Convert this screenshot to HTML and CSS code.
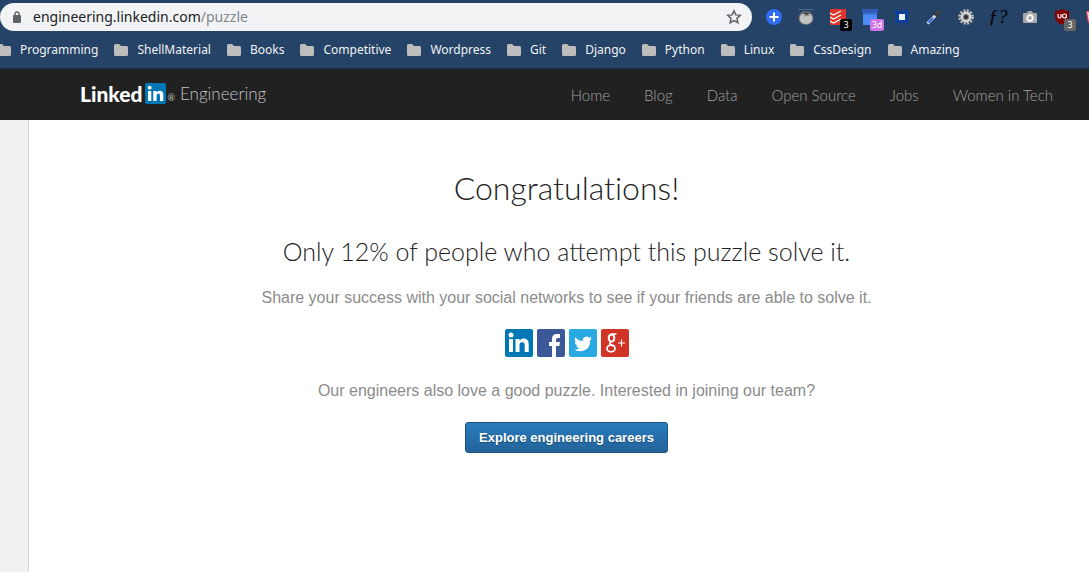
FILE: index.html
```html
<!DOCTYPE html>
<html lang="en">
<head>
<meta charset="utf-8">
<title>LinkedIn Engineering Puzzle</title>
<link rel="stylesheet" href="styles.css">
</head>
<body>
<svg class="defs" aria-hidden="true"><symbol id="folder" viewBox="0 0 14 12"><path d="M0 1.500Q0 0 1.500 0H5L7 2H12.500Q14 2 14 3.500V10.500Q14 12 12.500 12H1.500Q0 12 0 10.500Z" fill="#bdbdbd"/></symbol></svg>
<div class="browser">
  <div class="toolbar">
    <div class="omnibox">
      <svg class="lock" width="10" height="12" viewBox="0 0 10 12"><rect x="1" y="4" width="8" height="8" rx="1" fill="#5f6368"/><path d="M3 5V3a2 2 0 0 1 4 0v2" fill="none" stroke="#5f6368" stroke-width="1.4"/></svg>
      <span class="url">engineering.linkedin.com<span class="path">/puzzle</span></span>
      <button class="star" aria-label="Bookmark this page"><svg width="16" height="16" viewBox="0 0 16 16"><path d="M8 1.800l1.850 4.100 4.450.45-3.350 3 .95 4.400L8 11.500l-3.900 2.250.95-4.400-3.350-3 4.450-.45z" fill="none" stroke="#5f6368" stroke-width="1.500"/></svg></button>
    </div>
    <div class="extensions">
      <button class="ext" aria-label="Add"><svg width="16" height="16" viewBox="0 0 16 16"><circle cx="8" cy="8" r="8" fill="#2f6df6"/><path d="M8 3.500v9M3.500 8h9" stroke="#fff" stroke-width="2"/></svg></button>
      <button class="ext" aria-label="Timer"><svg width="16" height="16" viewBox="0 0 16 16"><ellipse cx="8" cy="9" rx="7.500" ry="7" fill="#777"/><ellipse cx="8" cy="9.500" rx="6.300" ry="5.500" fill="#c3c3c3"/><path d="M3 4l4 1-1 3 2-2 3 1-1-2 3-1-4-.5L8.500 1 7 3.500z" fill="#4c4c4c"/><path d="M0 .5h16" stroke="#48688a"/></svg></button>
      <button class="ext" aria-label="Tasks"><svg width="16" height="16" viewBox="0 0 16 16"><rect width="16" height="16" rx="1" fill="#e0352b"/><path d="M0 4l3.500 2L11 2M0 8l3.500 2L11 6M0 12l3.500 2L11 10" fill="none" stroke="#fff" stroke-width="1.300"/></svg><span class="badge black">3</span></button>
      <button class="ext" aria-label="Calendar"><svg width="16" height="16" viewBox="0 0 16 16"><rect y="0" width="16" height="4" fill="#3159b5"/><path d="M1 4h14v12H1z" fill="#4c8bf5"/><path d="M1 4h14v2H1z" fill="#3b73d9"/></svg><span class="badge pink">3d</span></button>
      <button class="ext" aria-label="Select area"><svg width="16" height="16" viewBox="0 0 16 16"><rect x="2" y="2" width="12" height="12" fill="#0b3e9c"/><path d="M3.500 0v16M12.500 0v16M0 3.500h16M0 12.500h16" stroke="#0b3e9c" stroke-width="2" stroke-dasharray="2 1"/><rect x="5" y="5" width="6" height="6" fill="#e8f4ff"/></svg></button>
      <button class="ext" aria-label="Colour picker"><svg width="16" height="16" viewBox="0 0 16 16"><path d="M1.500 14.500L10 6" stroke="#d8dce4" stroke-width="3"/><path d="M2.500 13.500L7 9" stroke="#3565e8" stroke-width="1.800"/><path d="M8 4l4 4" stroke="#333" stroke-width="2"/><path d="M10.500 5.500L14 2" stroke="#444" stroke-width="3.500"/></svg></button>
      <button class="ext" aria-label="Settings"><svg width="16" height="16" viewBox="0 0 16 16"><circle cx="8" cy="8" r="6.300" fill="none" stroke="#bbb" stroke-width="3" stroke-dasharray="2 1.300"/><circle cx="8" cy="8" r="4.200" fill="#777" stroke="#d5d5d5" stroke-width="2.500"/><circle cx="8" cy="8" r="2" fill="#333"/></svg></button>
      <button class="ext whatfont" aria-label="Identify font">ƒ?</button>
      <button class="ext" aria-label="Screenshot"><svg width="16" height="16" viewBox="0 0 16 16"><path d="M2 4h3l1-2h4l1 2h3q1 0 1 1v8q0 1-1 1H2q-1 0-1-1V5q0-1 1-1z" fill="#a9a9a9"/><circle cx="8" cy="9" r="2.800" fill="#a9a9a9" stroke="#fff" stroke-width="1.700"/></svg></button>
      <button class="ext" aria-label="Content blocker"><svg width="16" height="16" viewBox="0 0 16 16"><path d="M8 0q3 2 7 2v5q0 6-7 9-7-3-7-9V2q4 0 7-2z" fill="#800000"/><path d="M4 5v2.500a1.500 1.500 0 0 0 3 0V5" fill="none" stroke="#fff" stroke-width="1.200"/><circle cx="10.500" cy="7" r="2" fill="none" stroke="#fff" stroke-width="1.200"/></svg><span class="badge grey">3</span></button>
      <button class="ext" aria-label="More"><svg width="16" height="16" viewBox="0 0 16 16"><path d="M0 2h16l-3 12H2z" fill="#ef4056"/><path d="M1 3h2l1 10H3z" fill="#f7c9ce"/></svg></button>
    </div>
  </div>
  <nav class="bookmarks" aria-label="Bookmarks">
    <a href="#"><svg><use href="#folder"/></svg>Programming</a>
    <a href="#"><svg><use href="#folder"/></svg>ShellMaterial</a>
    <a href="#"><svg><use href="#folder"/></svg>Books</a>
    <a href="#"><svg><use href="#folder"/></svg>Competitive</a>
    <a href="#"><svg><use href="#folder"/></svg>Wordpress</a>
    <a href="#"><svg><use href="#folder"/></svg>Git</a>
    <a href="#"><svg><use href="#folder"/></svg>Django</a>
    <a href="#"><svg><use href="#folder"/></svg>Python</a>
    <a href="#"><svg><use href="#folder"/></svg>Linux</a>
    <a href="#"><svg><use href="#folder"/></svg>CssDesign</a>
    <a href="#"><svg><use href="#folder"/></svg>Amazing</a>
  </nav>
</div>
<header class="site-header">
  <a class="brand" href="#"><span class="linked">Linked</span><svg class="in" width="21" height="21" viewBox="0 0 21 21"><rect width="21" height="21" rx="2" fill="#0077b5"/><circle cx="4.700" cy="4.700" r="1.900" fill="#fff"/><path d="M3 8h3.300v10H3zM8.300 8h3.200v1.400q1-1.700 3.200-1.700 3.600 0 3.600 4.300v6H15v-5.300q0-2.100-1.600-2.100-1.800 0-1.800 2.100V18H8.300z" fill="#fff"/></svg><span class="reg">®</span><span class="dept">Engineering</span></a>
  <nav class="links" aria-label="Main">
    <a href="#">Home</a><a href="#">Blog</a><a href="#">Data</a><a href="#">Open Source</a><a href="#">Jobs</a><a href="#">Women in Tech</a>
  </nav>
</header>
<div class="page">
  <main class="content">
    <h1>Congratulations!</h1>
    <h2>Only 12% of people who attempt this puzzle solve it.</h2>
    <p>Share your success with your social networks to see if your friends are able to solve it.</p>
    <div class="social">
      <a href="#" aria-label="LinkedIn"><svg width="28" height="28" viewBox="0 0 28 28"><rect width="28" height="28" rx="2" fill="#0077b5"/><circle cx="6" cy="6" r="2.500" fill="#fff"/><path d="M4 10h4v13H4zM10.500 10h4v1.800q1.300-2.200 4.200-2.200 5 0 5 5.800V23h-4v-6.800q0-3-2.400-3-2.800 0-2.800 3V23h-4z" fill="#fff"/></svg></a>
      <a href="#" aria-label="Facebook"><svg width="28" height="28" viewBox="0 0 28 28"><rect width="28" height="28" rx="2" fill="#3b5998"/><path d="M15 28V17h-3v-4h3v-3q0-5 5-5h3v4h-2q-2 0-2 2v2h4l-.6 4H19v11z" fill="#fff"/></svg></a>
      <a href="#" aria-label="Twitter"><svg width="28" height="28" viewBox="0 0 28 28"><rect width="28" height="28" rx="2" fill="#29a9e1"/><path d="M23 9.200q-1 .5-2.100.6 1.200-.7 1.600-2-1.100.6-2.300.9a3.700 3.700 0 0 0-6.300 3.400q-4.600-.3-7.600-3.900-1.500 3 1.200 4.900-.9 0-1.700-.5 0 2.900 3 3.700-.8.200-1.700.1.900 2.500 3.500 2.600Q8.300 20.900 5 20.600q2.600 1.700 5.700 1.700 10.600-.4 10.500-11.200Q22.400 10.200 23 9.200z" fill="#fff"/></svg></a>
      <a href="#" aria-label="Google Plus"><svg width="28" height="28" viewBox="0 0 28 28"><rect width="28" height="28" rx="2" fill="#d13327"/><ellipse cx="10.500" cy="9" rx="2.800" ry="3.600" fill="none" stroke="#fff" stroke-width="2"/><ellipse cx="10" cy="19.500" rx="4" ry="3.300" fill="none" stroke="#fff" stroke-width="1.700"/><path d="M10.500 5H15.500M10 13q-2.500 1.500 0 2.500t3.500 2" fill="none" stroke="#fff" stroke-width="1.500"/><path d="M20.500 10.500v7M17 14h7" stroke="#fff" stroke-width="1.200"/></svg></a>
    </div>
    <p>Our engineers also love a good puzzle. Interested in joining our team?</p>
    <button class="cta">Explore engineering careers</button>
  </main>
</div>
</body>
</html>
```
FILE: styles.css
```css
* { box-sizing: border-box; }
body {
  display: flex;
  flex-direction: column;
  min-height: 100vh;
  margin: 0;
  overflow-x: hidden;
  font-family: "Liberation Sans", Arial, sans-serif;
}
a { color: inherit; text-decoration: none; }
button { padding: 0; border: 0; background: none; cursor: pointer; }
svg { display: block; flex: none; }
.defs { position: absolute; width: 0; height: 0; }

.browser {
  padding-top: 3px;
  overflow: hidden;
  background: #254267;
  border-bottom: 1px solid #1b2c44;
  font-family: "Noto Sans", sans-serif;
}
.toolbar { display: flex; align-items: center; height: 28px; }
.omnibox {
  display: flex;
  flex: 1;
  align-items: center;
  height: 28px;
  padding: 0 10px 0 12px;
  background: #f1f3f4;
  border-radius: 14px;
}
.url { flex: 1; margin-left: 11px; color: #202124; font-size: 14px; line-height: 20px; }
.path { color: #80868b; }
.extensions { display: flex; flex: none; width: 337px; padding-left: 6px; }
.ext {
  position: relative;
  display: flex;
  flex: none;
  align-items: center;
  justify-content: center;
  width: 32px;
  height: 28px;
}
.whatfont { color: #000; font: italic 19px "Liberation Serif", serif; }
.badge {
  position: absolute;
  right: 2px;
  bottom: 0;
  min-width: 12px;
  height: 12px;
  border-radius: 2px;
  color: #fff;
  font: 9px/12px "Noto Sans", sans-serif;
  text-align: center;
}
.black { background: #000; }
.pink { min-width: 14px; background: #cd74e6; }
.grey { background: #666; }

.bookmarks { display: flex; gap: 16px; height: 37px; margin-left: -3px; }
.bookmarks a {
  display: flex;
  flex: none;
  gap: 9px;
  align-items: center;
  color: #f1f3f4;
  font-size: 12px;
}
.bookmarks svg { width: 14px; height: 12px; }

.site-header {
  display: flex;
  align-items: center;
  justify-content: space-between;
  height: 51px;
  padding: 0 36px 0 80px;
  background: #212121;
  font-family: Lato, sans-serif;
}
.brand { display: flex; align-items: center; padding-bottom: 2px; color: #c4c4c4; }
.linked { color: #fff; font-size: 21px; font-weight: 900; line-height: 24px; }
.in { margin-left: 2px; }
.reg { margin: 8px 5px 0 2px; font-size: 9px; }
.dept { font-size: 17px; font-weight: 300; }
.links { display: flex; gap: 34px; color: #a0a0a0; font-size: 15px; font-weight: 300; }

.page { display: flex; flex: 1; padding-left: 28px; background: #f1f1f1; }
.content {
  flex: 1;
  padding: 48px 0 24px 15px;
  background: #fff;
  border-left: 1px solid #d5d5d5;
  text-align: center;
}
h1, h2 { margin: 0; color: #222; font-family: Lato, sans-serif; font-weight: 300; }
h1 { font-size: 32px; line-height: 40px; font-variant-ligatures: none; }
h2 { margin-top: 27px; font-size: 25px; line-height: 32px; }
p { margin: 21px 0; color: #8b8b8b; font-size: 16px; line-height: 20px; }
.social { display: flex; gap: 4px; justify-content: center; margin: 21px 0 24px; }
.cta {
  height: 31px;
  padding: 0 13px;
  background: linear-gradient(#287bbc, #23639a);
  border: 1px solid #1b5480;
  border-radius: 3px;
  color: #fff;
  font: bold 13px "Liberation Sans", Arial, sans-serif;
  text-shadow: 0 1px 1px #174a70;
}
```
